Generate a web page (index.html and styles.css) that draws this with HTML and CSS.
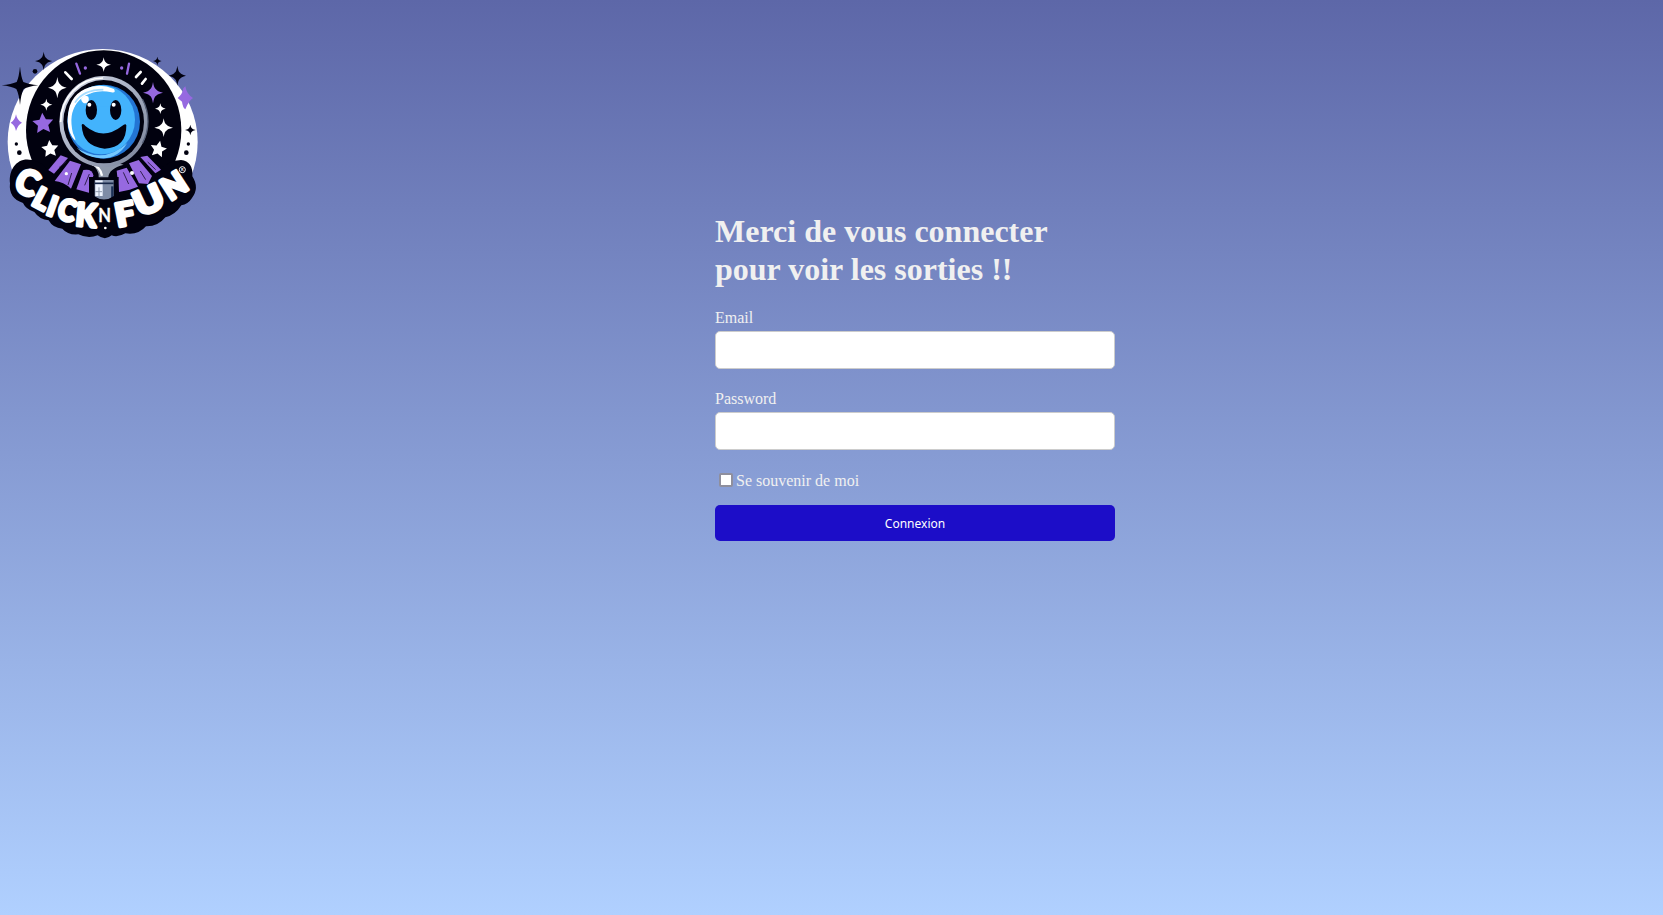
FILE: index.html
```html
<!DOCTYPE html>
<html lang="fr">
<head>
<meta charset="utf-8">
<title>Connexion</title>
<link rel="stylesheet" href="styles.css">
</head>
<body>
<header class="header">
<svg class="logo" viewBox="0 0 615 615" role="img" aria-label="Click n Fun">
  <defs>
    <path id="spark" d="M0-1Q.1-.4 .32-.3Q.4-.14 1 0Q.4 .14 .32 .3Q.1 .4 0 1Q-.1 .4-.32 .3Q-.4 .14-1 0Q-.4-.14-.32-.3Q-.1-.4 0-1Z"/>
    <path id="star" d="M0-1L.29-.38 .95-.31 .47.15 .59.81 0 .49-.59.81-.47.15-.95-.31-.29-.38Z"/>
    <linearGradient id="ring" x1="0" x2="1" y1="0" y2="1"><stop offset="0" stop-color="#e8eaf2"/><stop offset=".3" stop-color="#b9c0d2"/><stop offset="1" stop-color="#767f96"/></linearGradient>
  </defs>
  <ellipse cx="308" cy="306" rx="285" ry="279" fill="#fff"/>
  <ellipse cx="311" cy="270" rx="233" ry="239" fill="#01010f"/>
  <g class="badge">
    <path d="M30 430C25 385 55 350 95 360Q130 366 145 395Q300 440 470 395Q508 361 543 360Q580 364 577 409Q599 444 576 474Q564 493 544 496Q526 525 496 532Q474 560 438 559Q415 586 376 580Q352 594 335 586Q315 603 293 586Q265 598 235 583Q204 586 187 566Q158 564 146 541Q119 539 103 516Q77 507 69 489Q25 475 30 430Z"/>
  </g>
  <g class="rays">
    <path d="M182 346L204 354 162 401 145 390Z"/>
    <path d="M210 362L243 373 213 446Q190 425 164 423Z"/>
    <path d="M250 390Q277 385 280 406L269 459 229 448Z"/>
    <path d="M421 351L442 347 483 389 466 400Z"/>
    <path d="M387 370L416 360 456 408 444 432 417 430Z"/>
    <path d="M350 392L380 383 414 440 389 449 357 456Z"/>
  </g>
  <g class="ray-lines"><path d="M177 383L199 364M204 435L215 399M254 436L268 402M443 366L467 389M421 393L437 419M370 397L386 432"/></g>
  <g class="handle">
    <path d="M267 411H356V487H267Z" fill="#01010f"/>
    <path d="M272 370Q310 387 350 368L371 374Q326 386 325 412H296Q298 390 272 370Z" fill="#8f98aa"/>
    <path d="M277 373Q300 379 306 407" fill="none" stroke="#fff" stroke-width="7"/>
    <path d="M284 420H341V480H284Z" fill="#7e8ca6"/>
    <path d="M286 421H308V468H286Z" fill="#eef4ff"/>
    <path d="M284 430H341" stroke="#18284a" stroke-width="5"/>
    <path d="M286 455H306M297 442V470" stroke="#8e9aad" stroke-width="3"/>
    <path d="M337 439V478" stroke="#1c3158" stroke-width="7"/>
    <path d="M282 468Q312 489 342 468V495H282Z" fill="#01010f"/>
  </g>
  <ellipse cx="311" cy="245" rx="133" ry="137" fill="url(#ring)"/>
  <path d="M182 246A128 132 0 0 1 309 114" fill="none" stroke="#fff" stroke-width="5"/>
  <path d="M427 177A132 136 0 0 1 427 310" fill="none" stroke="#566078" stroke-width="4"/>
  <ellipse cx="311" cy="245" rx="121" ry="125" fill="#01010f"/>
  <ellipse cx="311" cy="245" rx="109" ry="111" fill="#2375d4"/>
  <ellipse cx="304" cy="239" rx="101" ry="104" fill="#43b3fc"/>
  <path d="M230 323Q310 375 382 309Q349 363 293 353Q254 349 230 323Z" fill="#73c8ff"/>
  <path d="M203 245Q202 171 255 147Q297 127 342 147Q349 160 334 157Q304 149 274 159L274 166Q260 165 265 178Q265 190 249 190Q241 177 231 190Q205 223 219 280Q229 302 225 301Q204 280 203 245Z" fill="#fff"/>
  <path d="M222 262Q209 200 249 172Q275 150 330 162L330 200H240Z" fill="#43b3fc"/>
  <path d="M243 176Q253 163 265 170Q270 184 258 190Q246 191 243 176Z" fill="#fff"/>
  <path d="M225 188Q249 149 310 149" fill="none" stroke="#a5dcff" stroke-width="5"/>
  <g fill="#01010f"><ellipse cx="274" cy="210" rx="17" ry="30"/><ellipse cx="347" cy="210" rx="17" ry="30"/>
  <path d="M245 255Q248 247 257 259Q310 302 366 258Q377 249 379 256Q380 323 314 326Q248 320 245 255Z"/></g>
  <g fill="#fff"><circle cx="268" cy="194" r="6"/><circle cx="341" cy="194" r="6"/></g>
  <g fill="#fff">
    <use href="#spark" transform="translate(311 74) scale(22)"/>
    <use href="#spark" transform="translate(172 143) scale(28 32)"/>
    <use href="#spark" transform="translate(139 194) scale(18)"/>
    <use href="#spark" transform="translate(481 206) scale(16)"/>
    <use href="#spark" transform="translate(491 263) scale(28)"/>
    <use href="#star" transform="translate(150 327) rotate(-5) scale(27)"/>
    <use href="#star" transform="translate(475 328) rotate(12) scale(26)"/>
  </g>
  <g fill="#9669e0">
    <use href="#star" transform="translate(129 251) rotate(-4) scale(33)"/>
    <use href="#spark" transform="translate(459 158) scale(30 32)"/>
    <path d="M556 139Q560 163 579 174Q566 182 556 208Q548 202 546 185L533 174Q548 162 550 145Z"/>
    <path d="M48 223Q51 241 66 248Q54 254 48 273Q45 255 32 248Q45 241 48 223Z"/>
    <circle cx="256" cy="84" r="5"/><circle cx="365" cy="84" r="5"/>
  </g>
  <g fill="#01010f">
    <path d="M60 79Q63 112 70 126Q86 133 115 136Q86 139 71 147Q63 162 60 195Q57 162 49 147Q34 139 5 136Q34 133 50 126Q57 112 60 79Z"/>
    <use href="#spark" transform="translate(131 63) scale(26 28)"/>
    <use href="#spark" transform="translate(532 107) scale(26 30)"/>
    <use href="#spark" transform="translate(472 63) scale(13)"/>
    <use href="#spark" transform="translate(571 270) scale(16)"/>
    <circle cx="105" cy="94" r="7"/><circle cx="49" cy="312" r="5"/><circle cx="58" cy="338" r="7"/>
    <circle cx="565" cy="312" r="5"/><circle cx="559" cy="338" r="7"/>
  </g>
  <g class="dashes"><path d="M229 71L240 101M387 71L381 101" stroke="#9669e0" stroke-width="7"/><path d="M196 97L215 117M422 96L408 111M437 117L426 131" stroke="#fff" stroke-width="8"/></g>
  <g fill="#fff"><circle cx="199" cy="401" r="5"/><circle cx="396" cy="399" r="6"/><circle cx="316" cy="564" r="4"/></g>
  <g class="brand">
    <text transform="translate(82 427) rotate(24) scale(.95 1)" y="37" font-size="104">C</text>
    <text transform="translate(126 476) rotate(28)" y="31" font-size="86">L</text>
    <text transform="translate(158 498) rotate(20)" y="30" font-size="82">I</text>
    <text transform="translate(202 510) rotate(16) scale(.9 1)" y="32" font-size="88">C</text>
    <text transform="translate(259 524) rotate(5) scale(.93 1)" y="35" font-size="96">K</text>
    <text class="small-n" transform="translate(314 526) scale(.92 1)" y="19" font-size="54">N</text>
    <text transform="translate(375 522) rotate(-11) scale(1.08 1)" y="34" font-size="96">F</text>
    <text transform="translate(446 480) rotate(-25) scale(1.14 1)" y="37" font-size="104">U</text>
    <text transform="translate(522 436) rotate(-33) scale(.98 1)" y="34" font-size="94">N</text>
    <circle cx="547" cy="389" r="9" fill="none" stroke-width="3"/>
    <text class="mark" x="547" y="394" font-size="12">R</text>
  </g>
</svg>
</header>
<main class="page">
  <form class="login">
    <h1 class="title">Merci de vous connecter pour voir les sorties !!</h1>
    <label class="label" for="email">Email</label>
    <input class="field" id="email" type="email">
    <label class="label" for="password">Password</label>
    <input class="field" id="password" type="password">
    <label class="remember"><input class="check" type="checkbox"><span>Se souvenir de moi</span></label>
    <button class="submit" type="button">Connexion</button>
  </form>
</main>
</body>
</html>
```
FILE: styles.css
```css
* { box-sizing: border-box; }
body {
  margin: 0;
  height: 915px;
  overflow: hidden;
  display: grid;
  grid-template-columns: 205px 1fr;
  background: linear-gradient(#5d67a8, #b0d0ff);
  color: #f0f0f0;
  font: 16px/18px "Liberation Serif", serif;
}
.header { padding-top: 40px; }
.logo { display: block; width: 205px; height: 205px; }
.badge { fill: #01010f; }
.rays { fill: #9669e0; }
.ray-lines { fill: none; stroke: #30204f; stroke-width: 3; }
.dashes { fill: none; stroke-linecap: round; }
.brand {
  fill: #fff;
  stroke: #fff;
  stroke-width: 10;
  stroke-linejoin: round;
  font-family: Lato, sans-serif;
  font-weight: 900;
  text-anchor: middle;
}
.small-n { stroke-width: 1; font-weight: 700; }
.mark { stroke-width: 0; }
.page { padding: 212px 0 0 510px; }
.login { display: flex; flex-direction: column; width: 400px; }
.title { margin: 0 0 20px; font-size: 32px; line-height: 38.4px; }
.label { height: 18px; margin-bottom: 4px; }
.field {
  width: 100%;
  height: 38px;
  margin: 0 0 21px;
  padding: 10px;
  border: 1px solid #ccc;
  border-radius: 5px;
  background: #fff;
}
.remember { display: flex; align-items: flex-start; gap: 3px; height: 18px; margin: 1px 0 15px 4px; }
.check {
  appearance: none;
  width: 14px;
  height: 14px;
  margin: 1px 0 0;
  border: 2px solid #8f8f9d;
  border-radius: 2px;
  background: #fff;
}
.submit {
  height: 36px;
  padding: 1px 0 0;
  border: 0;
  border-radius: 5px;
  background: #1c0dc8;
  color: #fff;
  font: 12px "Noto Sans", sans-serif;
}
```
